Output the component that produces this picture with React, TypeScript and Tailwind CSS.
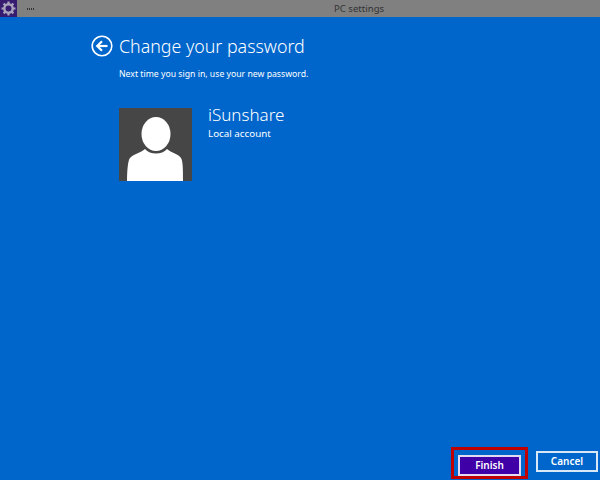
function GearIcon() {
  return (
    <svg className="h-[17px] w-[17px]" viewBox="0 0 17 17" fill="none" stroke="#a9a3bb">
      <circle cx="8.5" cy="8.5" r="4.2" strokeWidth={2.4} />
      <path d="M8.5 1.5v3M8.5 12.5v3M1.5 8.5h3M12.5 8.5h3M3.6 3.6l2 2M11.4 11.4l2 2M13.4 3.6l-2 2M5.6 11.4l-2 2" strokeWidth={2.2} />
    </svg>
  )
}

function BackIcon() {
  return (
    <svg className="h-[22px] w-[22px]" viewBox="0 0 22 22" fill="none" stroke="white">
      <circle cx="11" cy="11" r="9.8" strokeWidth={1.6} />
      <path d="M16.5 11H7" strokeWidth={2.2} />
      <path d="M11 6.2 6.2 11l4.8 4.8" strokeWidth={2.2} />
    </svg>
  )
}

function UserTile() {
  return (
    <div className="h-[73px] w-[73px] bg-[#464646]">
      <svg className="h-full w-full" viewBox="0 0 73 73" fill="white">
        <ellipse cx="37" cy="26" rx="14.5" ry="17" />
        <path d="M8 73C8 62 9 52 11 50C14 46 22 45 26 41C31 47 43 47 48 41C52 45 60 46 62 50C64 53 64 62 64 73Z" />
      </svg>
    </div>
  )
}

export default function App() {
  return (
    <div className="flex h-[480px] w-[600px] flex-col overflow-hidden bg-[#0066cc] text-white [font-family:'Noto_Sans','Open_Sans',sans-serif]">
      {/* Title bar */}
      <div className="flex h-[17px] items-center bg-[#808080]">
        <div className="flex h-[17px] w-[17px] items-center justify-center bg-[#371b70]">
          <GearIcon />
        </div>
        <div className="ml-[10px] flex gap-[1px]">
          <span className="h-[2px] w-[1px] bg-[#333]" />
          <span className="h-[2px] w-[1px] bg-[#333]" />
          <span className="h-[2px] w-[1px] bg-[#333]" />
          <span className="h-[2px] w-[1px] bg-[#333]" />
        </div>
        <div className="ml-[300px] text-[9.6px] leading-[17px] text-[#333]">PC settings</div>
      </div>

      {/* Content */}
      <div className="flex flex-1 flex-col pl-[91px] pt-[17px]">
        <div className="flex items-center gap-[6px]">
          <BackIcon />
          <h1 className="text-[17.8px] font-light leading-[24px]">Change your password</h1>
        </div>
        <p className="ml-[28px] mt-[9px] text-[8.7px] leading-[14px]">Next time you sign in, use your new password.</p>

        <div className="ml-[28px] mt-[27px] flex gap-[16px]">
          <UserTile />
          <div className="-mt-[3px]">
            <div className="text-[17px] font-light leading-[20px]">iSunshare</div>
            <div className="mt-[2px] text-[9.8px] leading-[13px]">Local account</div>
          </div>
        </div>
      </div>

      {/* Buttons */}
      <div className="flex justify-end gap-[15px] pb-[4px] pr-[2px]">
        <div className="relative">
          <button className="h-[21px] w-[63px] border-2 border-white/85 bg-[#3f00a8] text-[10px] font-semibold text-white">Finish</button>
          <div className="absolute -bottom-[3px] -left-[7px] -right-[7px] -top-[4px] border-[3px] border-[#c00000]" />
        </div>
        <button className="h-[21px] w-[62px] border-2 border-white/85 text-[10px] font-semibold text-white">Cancel</button>
      </div>
    </div>
  )
}
